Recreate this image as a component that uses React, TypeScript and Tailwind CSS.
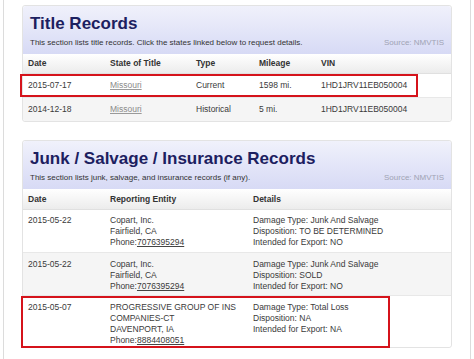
import React from "react";

const font = "font-['Liberation_Sans',Arial,Helvetica,sans-serif]";

type CardProps = {
  title: string;
  subtitle: string;
  className?: string;
  children: React.ReactNode;
};

function Card({ title, subtitle, className = "", children }: CardProps) {
  return (
    <section
      className={`w-[430px] rounded-[3px] border border-[#e3e3e3] bg-white ${className}`}
    >
      <header className="h-[48px] rounded-t-[3px] bg-gradient-to-b from-[#f0f1fb] to-[#d7daf5] px-[7px] pt-[8px]">
        <h2 className="text-[17px] font-bold leading-[20px] text-[#1c2060]">
          {title}
        </h2>
        <div className="mt-[4px] flex justify-between text-[8px] leading-[10px]">
          <span className="text-[#333]">{subtitle}</span>
          <span className="text-[#a0a3b4]">Source: NMVTIS</span>
        </div>
      </header>
      {children}
    </section>
  );
}

const headRow =
  "grid items-center bg-gradient-to-b from-white to-[#ececec] pl-[5px] text-[8.5px] font-bold text-[#333] border-b border-[#e0e0e0]";

const titleCols = "grid-cols-[82px_86px_63px_62px_1fr]";
const junkCols = "grid-cols-[82px_143px_1fr]";

const titleRows = [
  { date: "2015-07-17", state: "Missouri", type: "Current", miles: "1598 mi.", vin: "1HD1JRV11EB050004", mark: true },
  { date: "2014-12-18", state: "Missouri", type: "Historical", miles: "5 mi.", vin: "1HD1JRV11EB050004", mark: false },
];

const junkRows = [
  {
    date: "2015-05-22",
    entity: ["Copart, Inc.", "Fairfield, CA"],
    phone: "7076395294",
    details: ["Damage Type: Junk And Salvage", "Disposition: TO BE DETERMINED", "Intended for Export: NO"],
  },
  {
    date: "2015-05-22",
    entity: ["Copart, Inc.", "Fairfield, CA"],
    phone: "7076395294",
    details: ["Damage Type: Junk And Salvage", "Disposition: SOLD", "Intended for Export: NO"],
  },
  {
    date: "2015-05-07",
    entity: ["PROGRESSIVE GROUP OF INS", "COMPANIES-CT", "DAVENPORT, IA"],
    phone: "8884408051",
    details: ["Damage Type: Total Loss", "Disposition: NA", "Intended for Export: NA"],
  },
];

function TitleTable() {
  return (
    <div>
      <div className={`${headRow} ${titleCols} h-[20px]`}>
        <span>Date</span>
        <span>State of Title</span>
        <span>Type</span>
        <span>Mileage</span>
        <span>VIN</span>
      </div>
      {titleRows.map((r, i) => (
        <div
          key={i}
          className={`relative grid items-center pl-[5px] text-[8.5px] text-[#3a3a3a] ${titleCols} ${
            i === 0 ? "h-[23px] bg-white" : "h-[24px] bg-[#f5f5f5] border-t border-[#e8e8e8] rounded-b-[3px]"
          }`}
        >
          <span>{r.date}</span>
          <span>
            <a className="text-[#8a8a8a] underline decoration-[#9a9a9a]">{r.state}</a>
          </span>
          <span>{r.type}</span>
          <span>{r.miles}</span>
          <span>{r.vin}</span>
          {r.mark && (
            <div className="pointer-events-none absolute left-[-3px] top-0 h-[23px] w-[398px] border-2 border-[#d5131b]" />
          )}
        </div>
      ))}
    </div>
  );
}

function JunkTable() {
  return (
    <div>
      <div className={`${headRow} ${junkCols} h-[21px]`}>
        <span>Date</span>
        <span>Reporting Entity</span>
        <span>Details</span>
      </div>
      {junkRows.map((r, i) => (
        <div
          key={i}
          className={`relative grid items-start pl-[5px] text-[8.5px] leading-[11px] text-[#3a3a3a] ${junkCols} ${
            i === 1 ? "bg-[#f5f5f5]" : "bg-white"
          } ${i > 0 ? "border-t border-[#e8e8e8]" : ""} ${
            i === 0 ? "h-[42px] pt-[5px]" : i === 1 ? "h-[43px] pt-[6px]" : "h-[52px] pt-[6px] rounded-b-[3px]"
          }`}
        >
          <span>{r.date}</span>
          <div className="flex flex-col">
            {r.entity.map((l) => (
              <span key={l}>{l}</span>
            ))}
            <span>
              Phone:<a className="underline decoration-[#444]">{r.phone}</a>
            </span>
          </div>
          <div className="flex flex-col">
            {r.details.map((l) => (
              <span key={l}>{l}</span>
            ))}
          </div>
          {i === 2 && (
            <div className="pointer-events-none absolute left-[-2px] top-0 h-[52px] w-[369px] border-2 border-[#d5131b]" />
          )}
        </div>
      ))}
    </div>
  );
}

export default function App() {
  return (
    <div className={`h-[359px] w-[474px] overflow-hidden bg-white ${font}`}>
      <div className="ml-[3px] h-full w-[468px] border-x border-[#dcdcdc] pl-[18px] pt-[5px]">
        <Card
          title="Title Records"
          subtitle="This section lists title records. Click the states linked below to request details."
        >
          <TitleTable />
        </Card>
        <Card
          className="mt-[18px]"
          title="Junk / Salvage / Insurance Records"
          subtitle="This section lists junk, salvage, and insurance records (if any)."
        >
          <JunkTable />
        </Card>
      </div>
    </div>
  );
}
